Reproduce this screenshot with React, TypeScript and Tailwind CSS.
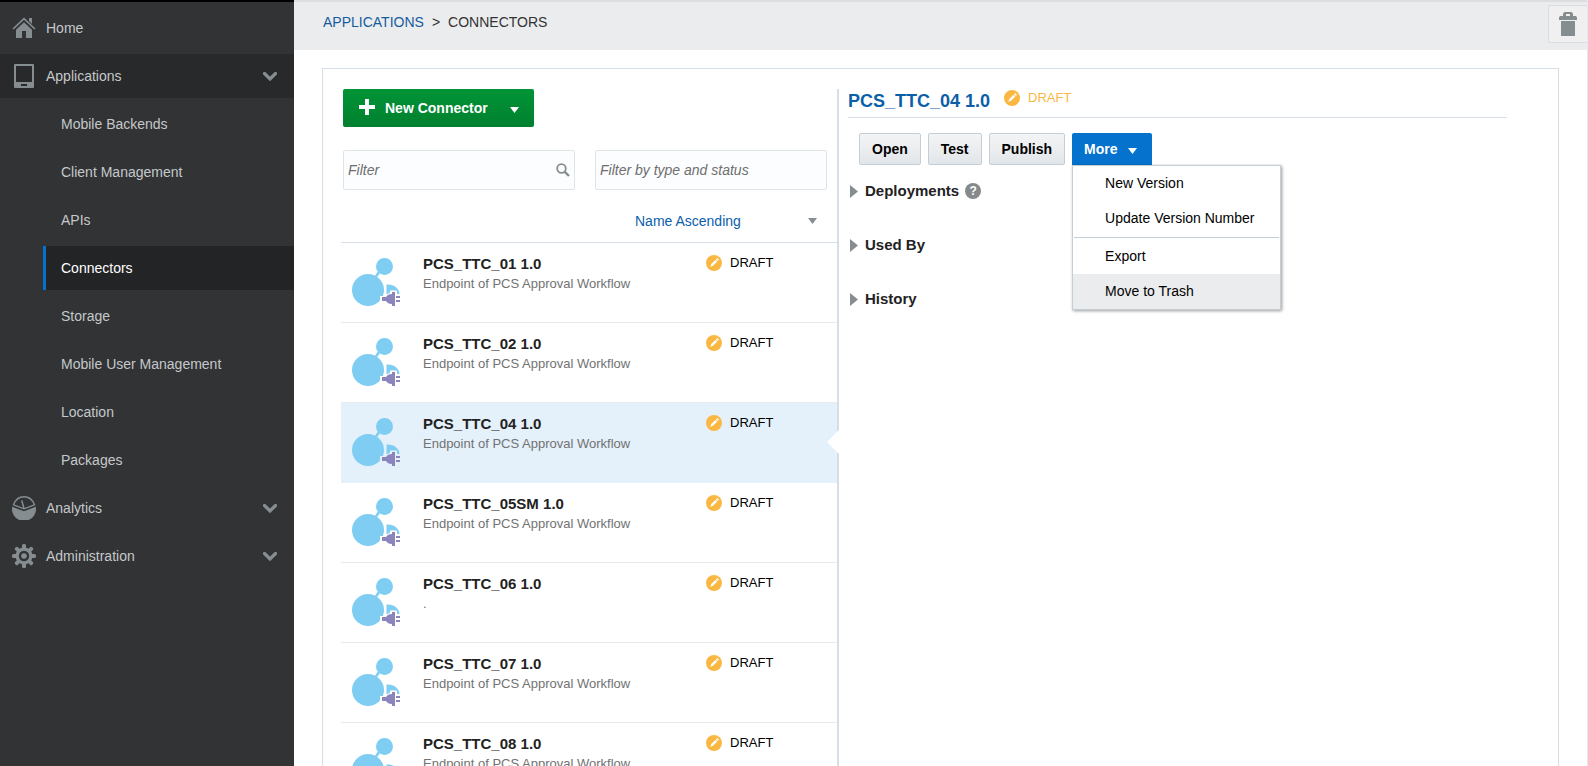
import React, { useState } from "react";

const subItems = [
  "Mobile Backends",
  "Client Management",
  "APIs",
  "Connectors",
  "Storage",
  "Mobile User Management",
  "Location",
  "Packages",
];

const connectors = [
  { name: "PCS_TTC_01 1.0", description: "Endpoint of PCS Approval Workflow" },
  { name: "PCS_TTC_02 1.0", description: "Endpoint of PCS Approval Workflow" },
  { name: "PCS_TTC_04 1.0", description: "Endpoint of PCS Approval Workflow" },
  { name: "PCS_TTC_05SM 1.0", description: "Endpoint of PCS Approval Workflow" },
  { name: "PCS_TTC_06 1.0", description: "." },
  { name: "PCS_TTC_07 1.0", description: "Endpoint of PCS Approval Workflow" },
  { name: "PCS_TTC_08 1.0", description: "Endpoint of PCS Approval Workflow" },
];

function HomeIcon() {
  return (
    <svg width="24" height="24" viewBox="0 0 24 24" fill="#868d91" aria-hidden="true">
      <path d="M17 2h3v6l-3-3z" />
      <path d="M1 13 12 2.6 23 13" fill="none" stroke="#868d91" strokeWidth="1.7" />
      <path d="M12 6.2 20 13.7V22h-6v-7h-4v7H4v-8.3z" />
    </svg>
  );
}

function TabletIcon() {
  return (
    <svg width="24" height="24" viewBox="0 0 24 24" aria-hidden="true">
      <path
        fill="#868d91"
        fillRule="evenodd"
        d="M3 0h18a1 1 0 0 1 1 1v22a1 1 0 0 1-1 1H3a1 1 0 0 1-1-1V1a1 1 0 0 1 1-1zM4 2v16h16V2zM9 20v2h6v-2z"
      />
    </svg>
  );
}

function GaugeIcon() {
  return (
    <svg width="24" height="24" viewBox="0 0 24 24" aria-hidden="true">
      <path d="M.2 10.8 12 15.2l11.8-4.4A12 12 0 1 1 .2 10.8z" fill="#868d91" />
      <path
        d="M1.5 8.8C3.5 3.5 7.5.8 12 .8s8.5 2.7 10.5 8L12 12.8z"
        fill="none"
        stroke="#868d91"
        strokeWidth="1.4"
      />
      <path d="M12 12.5 9.7 4.5" stroke="#868d91" strokeWidth="1.5" />
    </svg>
  );
}

function GearIcon() {
  return (
    <svg width="24" height="24" viewBox="0 0 24 24" aria-hidden="true">
      <g fill="#868d91">
        {[0, 45, 90, 135].map((angle) => (
          <rect key={angle} x="10" y="0" width="4" height="24" rx="1.5" transform={`rotate(${angle} 12 12)`} />
        ))}
        <circle cx="12" cy="12" r="8.5" />
      </g>
      <circle cx="12" cy="12" r="4" fill="none" stroke="#313335" strokeWidth="2.4" />
    </svg>
  );
}

function Chevron() {
  return (
    <svg width="14" height="10" viewBox="0 0 14 10" className="mt-[2px]" aria-hidden="true">
      <path d="M1.5 1.5 7 7l5.500-5.500" fill="none" stroke="#868d91" strokeWidth="3.2" strokeLinecap="round" />
    </svg>
  );
}

function Caret({ className }: { className: string }) {
  return (
    <svg width="9" height="6" viewBox="0 0 9 6" className={className} aria-hidden="true">
      <path d="M0 0h9L4.5 6z" fill="currentColor" />
    </svg>
  );
}

function DraftIcon() {
  return (
    <svg width="16" height="16" viewBox="0 0 16 16" className="shrink-0" aria-hidden="true">
      <circle cx="8" cy="8" r="8" fill="#fab843" />
      <g fill="#fff" transform="rotate(45 8 8)">
        <rect x="6.8" y="2.2" width="2.4" height="1.6" />
        <path d="M6.800 4.600h2.400v6L8 13.200l-1.200-2.600z" />
      </g>
    </svg>
  );
}

function ConnectorIcon({ selected }: { selected: boolean }) {
  const gap = selected ? "#e4f0fa" : "#ffffff";
  return (
    <svg width="48" height="48" viewBox="0 0 48 48" className="shrink-0" aria-hidden="true">
      <path d="M24 18.5 30 10" stroke="#7fcdf2" strokeWidth="2.6" />
      <circle cx="32.5" cy="8.5" r="8.5" fill="#7fcdf2" />
      <circle cx="16" cy="32" r="16" fill="#7fcdf2" />
      <path d="M34.500 36V26.500c6.500-.8 13 3.500 13 9.500z" fill="#7fcdf2" />
      <path d="M28 38h5l5-3.500V32.500h7V36h3v12H38v-2l-5-2.500h-5z" fill={gap} />
      <path
        d="M30 39h4c1.300-2 2.700-3 6-3v-2h3v14h-3v-2c-3.300 0-4.700-1-6-3h-4zM44 38h4v2h-4zM44 42h4v2h-4z"
        fill="#8c85bd"
      />
    </svg>
  );
}

function NavSection({
  label,
  icon,
  open,
  expandable,
}: {
  label: string;
  icon: React.ReactNode;
  open?: boolean;
  expandable?: boolean;
}) {
  return (
    <a
      href="#"
      className={
        open
          ? "flex h-11 items-center gap-[10px] bg-[#28292b] pr-[17px] pl-3"
          : "flex h-11 items-center gap-[10px] pr-[17px] pl-3"
      }
    >
      {icon}
      <span className="flex-1">{label}</span>
      {expandable && <Chevron />}
    </a>
  );
}

function Section({ title, help }: { title: string; help?: boolean }) {
  return (
    <section className="flex h-[54px] items-start gap-[6px]">
      <button type="button" className="flex h-5 items-center gap-[7px] text-[15px] font-bold text-[#222]">
        <svg width="8" height="13" viewBox="0 0 8 13" aria-hidden="true">
          <path d="M0 0 8 6.5 0 13z" fill="#868d91" />
        </svg>
        {title}
      </button>
      {help && (
        <button
          type="button"
          aria-label="Help"
          className="mt-[2px] flex size-4 items-center justify-center rounded-full bg-[#868a8d] text-xs font-bold text-white"
        >
          ?
        </button>
      )}
    </section>
  );
}

const actionButton =
  "h-8 rounded-[2px] border border-[#c4ced7] bg-linear-to-b from-[#f3f4f5] to-[#e3e6e9] px-3 text-sm font-bold text-black";
const menuItem = "flex h-[35px] w-full items-center pb-[2px] pl-8 text-left";

export default function App() {
  const [selected, setSelected] = useState(2);

  return (
    <div className="flex h-screen overflow-hidden bg-white font-['Liberation_Sans',Arial,sans-serif] text-sm">
      <nav className="w-[294px] shrink-0 border-t-2 border-black bg-[#313335] pt-1 font-medium text-[#c5c8ca]">
        <div className="flex flex-col gap-1">
          <NavSection label="Home" icon={<HomeIcon />} />
          <NavSection label="Applications" icon={<TabletIcon />} open expandable />
          {subItems.map((item) => (
            <a
              key={item}
              href="#"
              className={
                item === "Connectors"
                  ? "ml-[43px] flex h-11 items-center border-l-3 border-[#0572ce] bg-[#232426] pl-[15px] text-white"
                  : "ml-[43px] flex h-11 items-center pl-[18px]"
              }
            >
              {item}
            </a>
          ))}
          <NavSection label="Analytics" icon={<GaugeIcon />} expandable />
          <NavSection label="Administration" icon={<GearIcon />} expandable />
        </div>
      </nav>

      <div className="flex min-w-0 flex-1 flex-col border-r border-[#e6e8ea]">
        <header className="flex h-[50px] shrink-0 items-start justify-between border-t-2 border-[#dcdee0] bg-[#ebecee] pl-[29px]">
          <div className="flex h-10 items-center gap-2 text-[#333]">
            <a href="#" className="text-[#145c9e]">
              APPLICATIONS
            </a>
            <span>&gt;</span>
            <span>CONNECTORS</span>
          </div>
          <button
            type="button"
            aria-label="Trash"
            className="mt-[3px] flex h-[38px] w-[39px] items-center justify-center rounded-l-[2px] border border-r-0 border-[#d4dee7] bg-[#f0f0f1]"
          >
            <svg width="18" height="24" viewBox="0 0 18 24" fill="#868d91" aria-hidden="true">
              <path fillRule="evenodd" d="M4 4V1.500L5.500 0h7L14 1.500V4h3l1 1.500V8H0V5.500L1 4zM7 2v2h4V2z" />
              <path d="M2 9h14v15H2z" />
            </svg>
          </button>
        </header>

        <main className="mt-[18px] mr-[28px] ml-7 flex min-h-0 flex-1 overflow-hidden border border-b-0 border-[#d6dfe7] pt-5 pl-[18px]">
          <div className="w-[498px] shrink-0 border-r-2 border-[#d6dfe7]">
            <div className="px-[2px]">
              <button
                type="button"
                className="flex h-[38px] w-[191px] items-center rounded-[2px] bg-linear-to-b from-[#009436] to-[#00802f] pr-[15px] pl-4 font-bold text-white"
              >
                <svg width="16" height="16" viewBox="0 0 16 16" className="mb-[2px]" aria-hidden="true">
                  <path d="M6 0h4v6h6v4h-6v6H6v-6H0V6h6z" fill="#fff" />
                </svg>
                <span className="ml-[10px] flex-1 text-left">New Connector</span>
                <Caret className="mt-1 text-white" />
              </button>
            </div>

            <div className="mt-[23px] flex gap-5 pr-[10px] pl-[2px]">
              <label className="flex h-10 min-w-0 flex-1 items-center rounded-[2px] border border-[#dfe4e7] bg-[#fcfdfe] px-1">
                <input
                  type="text"
                  aria-label="Filter"
                  placeholder="Filter"
                  className="min-w-0 flex-1 bg-transparent italic outline-none placeholder:text-[#6e6e6e]"
                />
                <svg width="14" height="14" viewBox="0 0 14 14" fill="none" stroke="#868d91" aria-hidden="true">
                  <circle cx="5.5" cy="5.5" r="4.3" strokeWidth="1.8" />
                  <path d="m8.800 8.800 4.200 4.200" strokeWidth="2.4" />
                </svg>
              </label>
              <input
                type="text"
                aria-label="Filter by type and status"
                placeholder="Filter by type and status"
                className="h-10 min-w-0 flex-1 rounded-[2px] border border-[#dfe4e7] bg-[#fcfdfe] px-1 italic outline-none placeholder:text-[#6e6e6e]"
              />
            </div>

            <div className="flex h-[53px] items-center justify-end border-b border-[#d6dfe7] pt-[10px] pr-5">
              <button type="button" className="flex w-[182px] items-center justify-between text-[#0b60ab]">
                Name Ascending
                <Caret className="text-[#868d91]" />
              </button>
            </div>

            <ul>
              {connectors.map((connector, index) => (
                <li key={connector.name} className="relative">
                  <button
                    type="button"
                    onClick={() => setSelected(index)}
                    className={
                      index === selected
                        ? "flex h-20 w-full items-start border-b border-[#e4f0fa] bg-[#e4f0fa] pt-[15px] pl-[11px] text-left"
                        : "flex h-20 w-full items-start border-b border-[#e8eaec] bg-white pt-[15px] pl-[11px] text-left"
                    }
                  >
                    <ConnectorIcon selected={index === selected} />
                    <span className="-mt-[5px] ml-[23px] flex flex-1 flex-col">
                      <span className="text-[15px] leading-[21px] font-bold text-[#222]">{connector.name}</span>
                      <span className="text-[13px] leading-5 text-[#727272]">{connector.description}</span>
                    </span>
                    <span className="-mt-[5px] flex h-5 w-[131px] items-center gap-2 text-[13px] text-black">
                      <DraftIcon />
                      DRAFT
                    </span>
                  </button>
                  {index === selected && (
                    <svg
                      width="12"
                      height="24"
                      viewBox="0 0 12 24"
                      className="absolute top-[27px] -right-[2px]"
                      aria-hidden="true"
                    >
                      <path d="M12 0 0 12l12 12z" fill="#fff" />
                    </svg>
                  )}
                </li>
              ))}
            </ul>
          </div>

          <div className="min-w-0 flex-1 pr-[51px] pl-[9px]">
            <div className="flex h-[29px] border-b border-[#d6dfe7]">
              <h1 className="text-lg leading-6 font-bold text-[#0b5fa8]">PCS_TTC_04 1.0</h1>
              <span className="ml-[14px] flex h-[18px] items-center gap-2 text-[13px] text-[#fab843]">
                <DraftIcon />
                DRAFT
              </span>
            </div>

            <div className="mt-[15px] flex gap-[7px] pl-[11px]">
              <button type="button" className={actionButton}>
                Open
              </button>
              <button type="button" className={actionButton}>
                Test
              </button>
              <button type="button" className={actionButton}>
                Publish
              </button>
              <div className="relative">
                <button
                  type="button"
                  aria-haspopup="menu"
                  aria-expanded="true"
                  className="flex h-8 items-center gap-[10px] rounded-t-[2px] bg-[#0572ce] pr-[15px] pl-3 font-bold text-white"
                >
                  More
                  <Caret className="mt-1 text-white" />
                </button>
                <div
                  role="menu"
                  className="absolute top-8 left-0 w-[209px] border border-[#c4ced7] bg-white text-black shadow-[1px_1px_3px_rgba(0,0,0,0.4)]"
                >
                  <button type="button" role="menuitem" className={menuItem}>
                    New Version
                  </button>
                  <button type="button" role="menuitem" className={menuItem}>
                    Update Version Number
                  </button>
                  <div className="mx-px my-px border-t border-[#c4ced7]" />
                  <button type="button" role="menuitem" className={menuItem}>
                    Export
                  </button>
                  <button type="button" role="menuitem" className={`${menuItem} bg-[#ebecee]`}>
                    Move to Trash
                  </button>
                </div>
              </div>
            </div>

            <div className="mt-4 pl-[2px]">
              <Section title="Deployments" help />
              <Section title="Used By" />
              <Section title="History" />
            </div>
          </div>
        </main>
      </div>
    </div>
  );
}
